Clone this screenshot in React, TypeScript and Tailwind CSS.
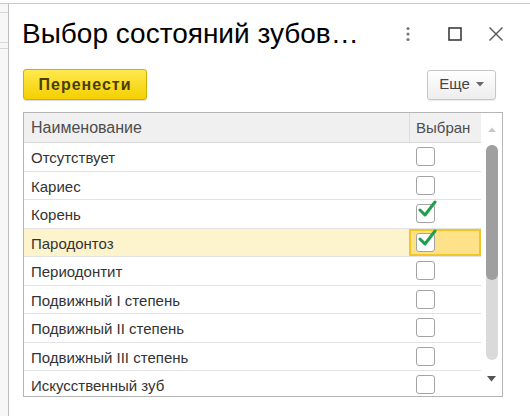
import React from "react";

const rows: { name: string; checked: boolean; selected?: boolean }[] = [
  { name: "Отсутствует", checked: false },
  { name: "Кариес", checked: false },
  { name: "Корень", checked: true },
  { name: "Пародонтоз", checked: true, selected: true },
  { name: "Периодонтит", checked: false },
  { name: "Подвижный I степень", checked: false },
  { name: "Подвижный II степень", checked: false },
  { name: "Подвижный III степень", checked: false },
  { name: "Искусственный зуб", checked: false },
];

function CheckBox({ checked }: { checked: boolean }) {
  return (
    <div className="relative w-[19px] h-[19px] rounded-[3px] border-[1.5px] border-[#a3a3a3] bg-white">
      {checked && (
        <svg
          className="absolute left-[1px] top-[-6px]"
          width="20"
          height="20"
          viewBox="0 0 20 20"
        >
          <path
            d="M2 11 L7 16 L17 3"
            fill="none"
            stroke="#1f9e4b"
            strokeWidth="3"
            strokeLinecap="round"
            strokeLinejoin="round"
          />
        </svg>
      )}
    </div>
  );
}

export default function App() {
  return (
    <div
      className="w-[530px] h-[416px] overflow-hidden bg-white flex flex-col"
      style={{ fontFamily: '"Liberation Sans", Arial, sans-serif' }}
    >
      <div className="h-[3px] bg-white shrink-0" />
      <div className="flex flex-1 border-t border-[#c9c9c9] min-h-0">
        {/* left background strip */}
        <div className="w-[9px] shrink-0 border-r border-[#bdbdbd] bg-[#f7f7f7] flex flex-col">
          <div className="h-[9px] border-b border-[#d6d6d6]" />
          <div className="h-[30px] border-b border-[#d6d6d6]" />
          <div className="h-[6px] border-b border-[#d6d6d6]" />
        </div>
        {/* dialog */}
        <div className="flex-1 flex flex-col pl-[13px] pr-[27px] min-w-0">
          <div className="flex items-center h-[32px] mt-[14px]">
            <div className="text-[28px] leading-[32px] text-black whitespace-nowrap">
              Выбор состояний зубов…
            </div>
            <div className="flex-1" />
            <div className="flex items-center">
              <svg width="6" height="16" viewBox="0 0 6 16" className="mr-[37px]">
                <circle cx="3" cy="2.5" r="1.6" fill="#7a7a7a" />
                <circle cx="3" cy="8" r="1.6" fill="#7a7a7a" />
                <circle cx="3" cy="13.5" r="1.6" fill="#7a7a7a" />
              </svg>
              <svg width="14" height="14" viewBox="0 0 14 14" className="mr-[26px]">
                <rect x="1" y="1" width="12" height="12" fill="none" stroke="#3c3c3c" strokeWidth="1.6" />
              </svg>
              <svg width="16" height="16" viewBox="0 0 16 16" className="mr-[-1px]">
                <path d="M1.5 1.5 L14.5 14.5 M14.5 1.5 L1.5 14.5" stroke="#555" strokeWidth="1.4" />
              </svg>
            </div>
          </div>

          <div className="flex items-center justify-between mt-[19px] ml-[1px] mr-[7px]">
            <button
              className="h-[31px] w-[124px] rounded-[3px] border border-[#d2ae00] text-[16px] tracking-[1px] font-bold text-[#4a3f00] shadow-[0_1px_1px_rgba(0,0,0,0.15)]"
              style={{ background: "linear-gradient(#ffe94f, #f4cf00)" }}
            >
              Перенести
            </button>
            <button
              className="h-[30px] w-[69px] rounded-[3px] border border-[#c6c6c6] text-[15px] text-[#444] flex items-center justify-center gap-[6px] shadow-[0_1px_1px_rgba(0,0,0,0.08)]"
              style={{ background: "linear-gradient(#ffffff, #ededed)" }}
            >
              <span>Еще</span>
              <svg width="8" height="5" viewBox="0 0 8 5">
                <path d="M0 0 L8 0 L4 4.5 Z" fill="#666" />
              </svg>
            </button>
          </div>

          {/* table */}
          <div className="mt-[12px] ml-[1px] h-[285px] border border-[#b5b5b5] flex overflow-hidden">
            <div className="flex-1 flex flex-col min-w-0">
              <div className="flex h-[30px] border-b border-[#d9d9d9] shrink-0">
                <div className="flex-1 bg-[#f0f0f0] text-[16px] text-[#4d4d4d] flex items-center pl-[7px] pt-[1px] border-r border-[#dcdcdc]">
                  Наименование
                </div>
                <div className="w-[71px] bg-[#f0f0f0] text-[15px] text-[#4d4d4d] flex items-center pl-[6px] pt-[1px]">
                  Выбран
                </div>
              </div>
              {rows.map((r) => (
                <div
                  key={r.name}
                  className={
                    "flex h-[28.5px] border-b border-[#e3e3e3] shrink-0 " +
                    (r.selected ? "bg-[#fdf3cd]" : "bg-white")
                  }
                >
                  <div className="flex-1 text-[15px] text-[#333] flex items-center pl-[7px] pt-[3px] whitespace-nowrap">
                    {r.name}
                  </div>
                  <div
                    className={
                      "w-[72px] flex items-center " +
                      (r.selected ? "bg-[#fde28a] border-2 border-[#f3c623] pl-[5px]" : "pl-[7px]")
                    }
                  >
                    <CheckBox checked={r.checked} />
                  </div>
                </div>
              ))}
            </div>
            {/* scrollbar */}
            <div className="w-[21px] shrink-0 flex flex-col items-center bg-white">
              <svg width="8" height="5" viewBox="0 0 8 5" className="mt-[14px]">
                <path d="M0 5 L8 5 L4 0.5 Z" fill="#c8c8c8" />
              </svg>
              <div className="mt-[13px] w-[12px] h-[215px] rounded-[6px] bg-[#dadada] flex flex-col">
                <div className="h-[135px] rounded-[6px] bg-[#9f9f9f]" />
              </div>
              <svg width="9" height="6" viewBox="0 0 9 6" className="mt-[16px]">
                <path d="M0 0 L9 0 L4.5 5.5 Z" fill="#555" />
              </svg>
            </div>
          </div>
        </div>
      </div>
    </div>
  );
}
